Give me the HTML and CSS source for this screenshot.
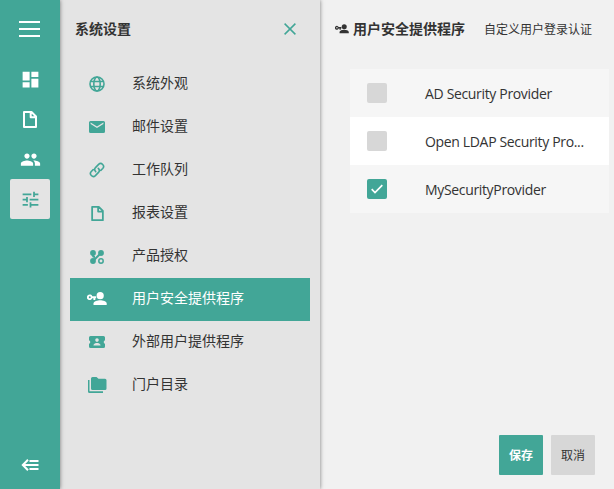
FILE: index.html
```html
<!DOCTYPE html>
<html lang="zh-CN">
<head>
<meta charset="utf-8">
<title>系统设置</title>
<link rel="stylesheet" href="styles.css">
</head>
<body>
<svg class="defs" width="0" height="0">
  <symbol id="file" viewBox="0 0 16 19"><path fill="none" stroke="currentColor" stroke-width="2" stroke-linejoin="round" d="M2 2h7.500L14 6.500V17H2zM8.700 2v5.300H14"/></symbol>
  <symbol id="userkey" viewBox="0 0 20 14"><circle cx="13.2" cy="3.7" r="3.6"/><path d="M6.5 13v-1.6c0-2.1 4.2-3.2 6.7-3.2s6.5 1.1 6.5 3.2V13z"/><path fill-rule="evenodd" d="M5.3 4.3A2.8 2.8 0 1 0 5.3 6.3H6.4V8H8.3V6.3H9.2V4.3zM2.8 4.3a1 1 0 1 1 0 2 1 1 0 0 1 0-2z"/></symbol>
</svg>
<div class="app">
  <nav class="rail">
    <a class="burger"><i></i><i></i><i></i></a>
    <a class="tile"><svg width="21" height="21" viewBox="0 0 24 24"><path d="M3 13h8V3H3zm0 8h8v-6H3zm10 0h8V11h-8zm0-18v6h8V3z"/></svg></a>
    <a class="tile"><svg width="16" height="19"><use href="#file"/></svg></a>
    <a class="tile"><svg width="21" height="21" viewBox="0 0 24 24"><path d="M16 11c1.660 0 2.990-1.340 2.990-3S17.660 5 16 5s-3 1.340-3 3 1.340 3 3 3zm-8 0c1.660 0 2.990-1.340 2.990-3S9.660 5 8 5 5 6.340 5 8s1.340 3 3 3zm0 2c-2.330 0-7 1.170-7 3.500V19h14v-2.500C15 14.170 10.330 13 8 13zm8 0c-.290 0-.620.020-.970.050 1.160.840 1.970 1.970 1.970 3.450V19h6v-2.500c0-2.330-4.670-3.500-7-3.500z"/></svg></a>
    <a class="tile active"><svg width="21" height="21" viewBox="0 0 24 24"><path d="M3 17v2h6v-2zM3 5v2h10V5zm10 16v-2h8v-2h-8v-2h-2v6zM7 9v2H3v2h4v2h2V9zm14 4v-2H11v2zm-6-4h2V7h4V5h-4V3h-2z"/></svg></a>
    <a class="tile collapse"><svg width="18" height="12" viewBox="0 0 18 12"><path fill="none" stroke="currentColor" stroke-width="2" d="M7 .8 1.800 6 7 11.200M2 6h15.500M8.500 2h9M8.500 10h9"/></svg></a>
  </nav>
  <aside class="panel">
    <header class="panel-head"><h2>系统设置</h2><svg width="12" height="12" viewBox="0 0 12 12"><path fill="none" stroke="currentColor" stroke-width="1.500" d="M.6.6l10.800 10.800M11.400.6.6 11.400"/></svg></header>
    <ul class="menu">
      <li><span class="ico"><svg width="16" height="16" viewBox="0 0 16 16"><g fill="none" stroke="currentColor" stroke-width="1.600"><circle cx="8" cy="8" r="7"/><ellipse cx="8" cy="8" rx="3.200" ry="7"/><path d="M1.700 5.500h12.600M1.700 10.500h12.600"/></g></svg></span>系统外观</li>
      <li><span class="ico"><svg width="16" height="12" viewBox="0 0 16 12"><path fill-rule="evenodd" d="M1.500 0h13A1.500 1.500 0 0 1 16 1.500v9a1.500 1.500 0 0 1-1.500 1.500h-13A1.500 1.500 0 0 1 0 10.500v-9A1.500 1.500 0 0 1 1.500 0zM1.600 1.600V3L8 7l6.400-4V1.600L8 5.500z"/></svg></span>邮件设置</li>
      <li><span class="ico"><svg width="16" height="16" viewBox="0 0 16 16"><path fill="none" stroke="currentColor" stroke-width="1.600" stroke-linecap="round" d="M6.700 9.600A2.900 2.900 0 0 1 6.500 5.600L9.600 2.400a2.900 2.900 0 0 1 4.100 4.100L11.800 8.400M9.300 6.400a2.900 2.900 0 0 1 .2 4L6.400 13.600A2.900 2.900 0 0 1 2.300 9.500L4.200 7.600"/></svg></span>工作队列</li>
      <li><span class="ico"><svg width="15" height="17"><use href="#file"/></svg></span>报表设置</li>
      <li><span class="ico low"><svg width="14" height="14" viewBox="0 0 14 14"><circle cx="3" cy="3" r="2.900"/><circle cx="11" cy="3" r="2.900"/><circle cx="3" cy="11" r="2.900"/><path fill="none" stroke="currentColor" stroke-width="2" d="M3 3v2.500q0 1.500 2 1.500M11 3 3 11"/><circle cx="11" cy="11" r="2.200" fill="none" stroke="currentColor" stroke-width="1.500"/></svg></span>产品授权</li>
      <li class="selected"><span class="ico"><svg width="20" height="14"><use href="#userkey"/></svg></span>用户安全提供程序</li>
      <li><span class="ico"><svg width="16" height="12" viewBox="0 0 16 12"><path fill-rule="evenodd" d="M1.500 0h13A1.500 1.500 0 0 1 16 1.500v2.700a1.900 1.900 0 0 0 0 3.600v2.700a1.500 1.500 0 0 1-1.500 1.500h-13A1.500 1.500 0 0 1 0 10.500V7.800a1.900 1.900 0 0 0 0-3.600V1.500A1.500 1.500 0 0 1 1.500 0zM8 2.300a1.800 1.800 0 1 0 0 3.600 1.800 1.800 0 0 0 0-3.600zM4.500 9.600h7V9c0-1.500-2.300-2.100-3.500-2.100S4.500 7.500 4.500 9z"/></svg></span>外部用户提供程序</li>
      <li><span class="ico"><svg width="19" height="16" viewBox="0 0 19 16"><path d="M0 3h1.500v11.300H15V16H1.500A1.500 1.500 0 0 1 0 14.500zM4.500 0h4l2 1.800H17a1.500 1.500 0 0 1 1.500 1.500v8.200A1.500 1.500 0 0 1 17 13H4.500A1.500 1.500 0 0 1 3 11.500v-10A1.500 1.500 0 0 1 4.500 0z"/></svg></span>门户目录</li>
    </ul>
  </aside>
  <main class="main">
    <header class="main-head"><svg width="14" height="10"><use href="#userkey"/></svg><h1>用户安全提供程序</h1><p>自定义用户登录认证</p></header>
    <div class="list">
      <label class="row"><span class="box"></span><span class="name">AD Security Provider</span></label>
      <label class="row white"><span class="box"></span><span class="name">Open LDAP Security Pro...</span></label>
      <label class="row"><span class="box checked"><svg width="12" height="10" viewBox="0 0 12 10"><path fill="none" stroke="currentColor" stroke-width="1.700" d="M.7 5.200 4 8.500 11.300 1.200"/></svg></span><span class="name">MySecurityProvider</span></label>
    </div>
    <footer class="actions"><button class="save">保存</button><button>取消</button></footer>
  </main>
</div>
</body>
</html>
```
FILE: styles.css
```css
* { box-sizing: border-box; }
body { margin: 0; font: 14px/20px "Noto Sans", "Noto Sans CJK SC", sans-serif; color: #333; }
h1, h2, p, ul { margin: 0; padding: 0; font-size: 14px; }
svg { display: block; flex: none; fill: currentColor; }
.defs { position: absolute; }
.app { display: flex; height: 489px; overflow: hidden; background: #f1f1f1; }
.rail { width: 60px; flex: none; display: flex; flex-direction: column; align-items: center; background: #42a697; color: #fff; box-shadow: 0 0 4px rgba(0,0,0,.5); z-index: 2; }
.burger { width: 21px; height: 59px; margin-right: 1px; padding-top: 21px; display: flex; flex-direction: column; gap: 5px; }
.burger i { height: 2px; background: #fff; }
.tile { width: 40px; height: 40px; display: flex; align-items: center; justify-content: center; border-radius: 2px; }
.active { background: #e4e4e4; color: #42a697; }
.collapse { margin-top: auto; margin-bottom: 4px; }
.panel { width: 260px; flex: none; background: #e4e4e4; box-shadow: 0 0 4px rgba(0,0,0,.5); z-index: 1; }
.panel-head { height: 63px; padding: 19px 24px 0 15px; display: flex; justify-content: space-between; }
.panel-head svg { margin-top: 4px; color: #42a697; }
.menu { list-style: none; padding: 0 10px; }
.menu li { height: 43px; padding-bottom: 3px; display: flex; align-items: center; }
.ico { width: 54px; height: 20px; margin-right: 8px; display: flex; align-items: center; justify-content: center; color: #42a697; }
.ico svg { margin-top: 2px; }
.low svg { margin-top: 3px; }
.menu .selected { background: #42a697; color: #fff; }
.selected .ico { color: #fff; }
.main { flex: 1; display: flex; flex-direction: column; }
.main-head { height: 69px; padding: 19px 0 0 15px; display: flex; white-space: nowrap; }
.main-head svg { margin: 5px 4px 0 0; }
.main-head p { margin: 1px 0 0 19px; font-size: 12px; }
.list { width: 259px; margin-left: 30px; }
.row { height: 48px; padding-left: 17px; display: flex; align-items: center; background: #f6f6f6; }
.white { background: #fff; }
.box { width: 20px; height: 20px; margin-right: 38px; border-radius: 2px; background: #d7d7d7; display: flex; align-items: center; justify-content: center; }
.checked { background: #42a697; color: #fff; }
.name { font: 14px/20px "Open Sans", sans-serif; margin-top: 2px; white-space: nowrap; letter-spacing: -.34px; }
.actions { margin-top: auto; padding: 0 19px 14px; display: flex; justify-content: flex-end; gap: 8px; }
button { width: 44px; height: 40px; padding: 0; border: 0; border-radius: 1px; background: #d7d7d7; color: #333; font: 12px/18px "Noto Sans CJK SC", sans-serif; }
.save { background: #42a697; color: #fff; font-weight: 700; }
```
